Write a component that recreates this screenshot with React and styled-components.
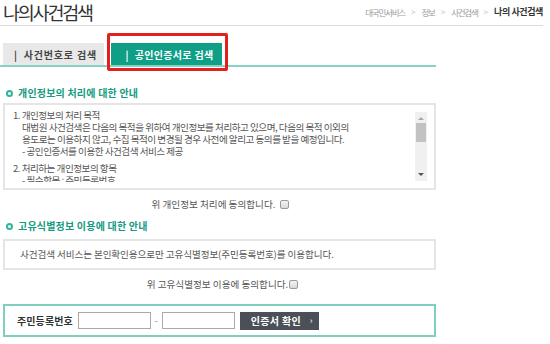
import React from "react";
import styled, { createGlobalStyle } from "styled-components";

const Global = createGlobalStyle`
  html, body { margin: 0; padding: 0; background: #fff; }
  body { font-family: "Noto Sans CJK KR", "Noto Sans", sans-serif; color: #555; }
  * { box-sizing: border-box; }
`;

const Page = styled.div`
  width: 550px;
  height: 344px;
  overflow: hidden;
  padding-right: 7px;
`;

const Header = styled.div`
  display: flex;
  justify-content: space-between;
  align-items: flex-start;
  height: 26px;
  border-bottom: 1px solid #dcdcdc;
`;

const Title = styled.h1`
  margin: 0;
  padding: 0 0 0 3px;
  font-size: 18.5px;
  line-height: 24px;
  font-weight: 400;
  letter-spacing: -2.2px;
  color: #333;
`;

const Crumbs = styled.div`
  display: flex;
  align-items: center;
  gap: 6px;
  padding-top: 6px;
  font-size: 8.5px;
  line-height: 12px;
  color: #9a9a9a;
  letter-spacing: -1.2px;
`;

const Sep = styled.span`
  color: #bbb;
  font-size: 8px;
  letter-spacing: 0;
`;

const Current = styled.span`
  color: #333;
  font-weight: 700;
  font-size: 9px;
  letter-spacing: -0.4px;
`;

const Content = styled.div`
  width: 433px;
  margin-left: 3px;
`;

const TabBar = styled.div`
  display: flex;
  gap: 7px;
  margin-top: 17px;
  margin-left: -3px;
  padding-left: 3px;
  width: 436px;
  border-bottom: 2px solid #86d3c3;
`;

const Tab = styled.div`
  position: relative;
  width: ${(p) => p.$w}px;
  height: 22px;
  display: flex;
  align-items: center;
  justify-content: center;
  font-size: 10px;
  font-weight: 700;
  letter-spacing: ${(p) => (p.$active ? 0.3 : 0.8)}px;
  background: ${(p) => (p.$active ? "#0f9e86" : "#e8e8e8")};
  color: ${(p) => (p.$active ? "#fff" : "#444")};
  padding-left: ${(p) => (p.$active ? 6 : 4)}px;
`;

const Bar = styled.span`
  margin-right: 6px;
  font-weight: 700;
`;

const Highlight = styled.div`
  position: absolute;
  top: -10px;
  bottom: -6px;
  left: -4px;
  right: -6px;
  border: 3px solid #e3201d;
  border-radius: 2px;
  pointer-events: none;
`;

const SectionTitle = styled.h2`
  display: flex;
  align-items: center;
  gap: 5px;
  margin: ${(p) => p.$mt}px 0 0 3px;
  font-size: 10px;
  line-height: 12px;
  font-weight: 700;
  color: #139a82;
  letter-spacing: 0.2px;
`;

const Ring = styled.span`
  width: 7px;
  height: 7px;
  border-radius: 50%;
  border: 2px solid #2fb59b;
`;

const InfoBox = styled.div`
  display: flex;
  margin-top: ${(p) => p.$mt}px;
  height: ${(p) => p.$h}px;
  border: 2px solid #e5e5e5;
`;

const ScrollText = styled.div`
  flex: 1;
  overflow: hidden;
  margin-bottom: 6px;
  padding: 4px 0 0 8px;
  font-size: 9.6px;
  line-height: 12px;
  color: #555;
  letter-spacing: -0.5px;
`;

const Line = styled.div`
  white-space: pre;
  padding-left: ${(p) => (p.$indent ? 9 : 0)}px;
  min-height: ${(p) => (p.$blank ? 5 : 12)}px;
`;

const Scrollbar = styled.div`
  width: 12px;
  margin: 7px 7px 7px 0;
  background: #f0f0f0;
  display: flex;
  flex-direction: column;
  align-items: center;
`;

const Arrow = styled.span`
  width: 0;
  height: 0;
  margin: 5px 0 3px;
  border-left: 3px solid transparent;
  border-right: 3px solid transparent;
  ${(p) =>
    p.$down
      ? "border-top: 3px solid #555; margin: auto 0 5px;"
      : "border-bottom: 3px solid #a8a8a8;"}
`;

const Thumb = styled.span`
  width: 10px;
  height: 19px;
  background: #c2c2c2;
`;

const PlainText = styled.div`
  font-size: 9.6px;
  line-height: 27px;
  color: #555;
  padding-left: 15px;
  letter-spacing: -0.1px;
`;

const Agree = styled.label`
  display: flex;
  justify-content: center;
  align-items: center;
  gap: ${(p) => p.$gap}px;
  margin-top: ${(p) => p.$mt}px;
  padding-left: ${(p) => p.$pl}px;
  font-size: 9.6px;
  line-height: 12px;
  color: #555;
`;

const Check = styled.span`
  width: 9px;
  height: 9px;
  border: 1px solid #9a9a9a;
  border-radius: 2px;
  background: linear-gradient(#f4f4f4, #d8d8d8);
`;

const IdBox = styled.div`
  display: flex;
  align-items: center;
  margin-top: 14px;
  height: 33px;
  border: 2px solid #7fcfbe;
  padding-left: 12px;
`;

const Label = styled.span`
  font-size: 10px;
  font-weight: 700;
  color: #333;
  letter-spacing: 0.1px;
  margin-right: 5px;
`;

const Input = styled.span`
  width: 73px;
  height: 17px;
  border: 1px solid #a9a9a9;
  background: #fff;
`;

const Dash = styled.span`
  width: 11px;
  text-align: center;
  font-size: 9px;
  color: #777;
`;

const Button = styled.button`
  display: flex;
  align-items: center;
  justify-content: space-between;
  margin-left: 5px;
  width: 79px;
  height: 18px;
  padding: 0 6px 0 11px;
  border: none;
  border-radius: 0;
  background: #4b4f57;
  color: #fff;
  font-family: inherit;
  font-size: 10px;
  font-weight: 700;
  letter-spacing: 0.3px;
`;

const Chev = styled.span`
  font-size: 9px;
  font-weight: 400;
`;

const lines = [
  { t: "1. 개인정보의 처리 목적" },
  { t: "대법원 사건검색은 다음의 목적을 위하여 개인정보를 처리하고 있으며, 다음의 목적 이외의", i: true },
  { t: "용도로는 이용하지 않고, 수집 목적이 변경될 경우 사전에 알리고 동의를 받을 예정입니다.", i: true },
  { t: "- 공인인증서를 이용한 사건검색 서비스 제공", i: true },
  { t: "", b: true },
  { t: "2. 처리하는 개인정보의 항목" },
  { t: "- 필수항목 : 주민등록번호", i: true },
];

export default function App() {
  return (
    <Page>
      <Global />
      <Header>
        <Title>나의사건검색</Title>
        <Crumbs>
          <span>대국민서비스</span>
          <Sep>&gt;</Sep>
          <span>정보</span>
          <Sep>&gt;</Sep>
          <span>사건검색</span>
          <Sep>&gt;</Sep>
          <Current>나의 사건검색</Current>
        </Crumbs>
      </Header>
      <Content>
        <TabBar>
          <Tab $w={101}>
            <Bar>|</Bar>사건번호로 검색
          </Tab>
          <Tab $w={111} $active>
            <Bar>|</Bar>공인인증서로 검색
            <Highlight />
          </Tab>
        </TabBar>

        <SectionTitle $mt={20}>
          <Ring />
          개인정보의 처리에 대한 안내
        </SectionTitle>
        <InfoBox $mt={4} $h={87}>
          <ScrollText>
            {lines.map((l, k) => (
              <Line key={k} $indent={l.i} $blank={l.b}>
                {l.t}
              </Line>
            ))}
          </ScrollText>
          <Scrollbar>
            <Arrow />
            <Thumb />
            <Arrow $down />
          </Scrollbar>
        </InfoBox>
        <Agree $mt={8} $gap={5} $pl={2}>
          위 개인정보 처리에 동의합니다.
          <Check />
        </Agree>

        <SectionTitle $mt={10}>
          <Ring />
          고유식별정보 이용에 대한 안내
        </SectionTitle>
        <InfoBox $mt={7} $h={31}>
          <PlainText>
            사건검색 서비스는 본인확인용으로만 고유식별정보(주민등록번호)를 이용합니다.
          </PlainText>
        </InfoBox>
        <Agree $mt={8} $gap={1} $pl={6}>
          위 고유식별정보 이용에 동의합니다.
          <Check />
        </Agree>

        <IdBox>
          <Label>주민등록번호</Label>
          <Input />
          <Dash>-</Dash>
          <Input />
          <Button>
            인증서 확인<Chev>›</Chev>
          </Button>
        </IdBox>
      </Content>
    </Page>
  );
}
